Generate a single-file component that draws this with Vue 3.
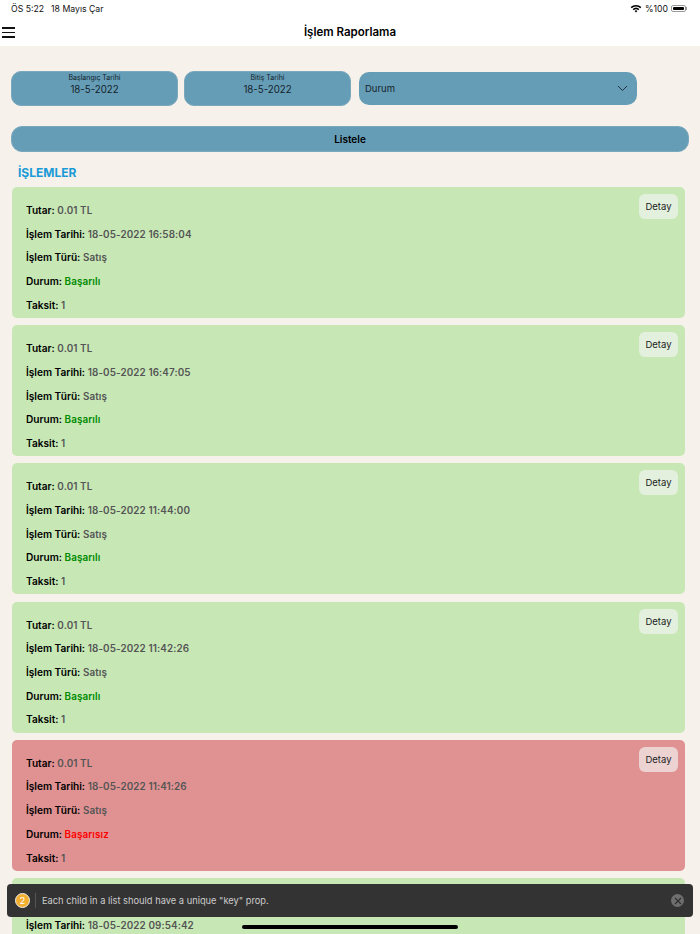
<template>
  <div class="page">
    <div class="status-bar">
      <div class="status-left">
        <span>ÖS 5:22</span>
        <span>18 Mayıs Çar</span>
      </div>
      <div class="status-right">
        <svg width="12" height="9" viewBox="0 0 12 9">
          <path d="M0.6 3.1A7.8 7.8 0 0 1 11.4 3.1L10.3 4.3A6.2 6.2 0 0 0 1.7 4.3Z" fill="#000" />
          <path d="M2.6 5.1A5 5 0 0 1 9.4 5.1L8.3 6.3A3.4 3.4 0 0 0 3.7 6.3Z" fill="#000" />
          <path d="M4.6 7A2 2 0 0 1 7.4 7L6 8.6Z" fill="#000" />
        </svg>
        <span>%100</span>
        <div class="battery"><div class="battery-fill"></div></div>
        <div class="battery-cap"></div>
      </div>
    </div>

    <header class="header">
      <button class="menu" aria-label="Menü">
        <span></span><span></span><span></span>
      </button>
      <h1>İşlem Raporlama</h1>
    </header>

    <main class="content">
      <div class="filters">
        <div class="date-box">
          <div class="date-label">Başlangıç Tarihi</div>
          <div class="date-value">18-5-2022</div>
        </div>
        <div class="date-box">
          <div class="date-label">Bitiş Tarihi</div>
          <div class="date-value">18-5-2022</div>
        </div>
        <div class="select-box">
          <span>Durum</span>
          <svg width="11" height="7" viewBox="0 0 11 7" fill="none">
            <path d="M1 1L5.5 5.5L10 1" stroke="#22333d" stroke-width="1" />
          </svg>
        </div>
      </div>

      <button class="list-btn">Listele</button>

      <h2 class="section-title">İŞLEMLER</h2>

      <div class="cards">
        <div v-for="item in islemler" :key="item.tarih" class="card" :class="{ failed: !item.basarili }">
          <button class="detail-btn">Detay</button>
          <div class="row"><b>Tutar:</b> 0.01 TL</div>
          <div class="row"><b>İşlem Tarihi:</b> {{ item.tarih }}</div>
          <div class="row"><b>İşlem Türü:</b> Satış</div>
          <div class="row"><b>Durum:</b> <span class="status" :class="item.basarili ? 'ok' : 'err'">{{ item.basarili ? 'Başarılı' : 'Başarısız' }}</span></div>
          <div class="row"><b>Taksit:</b> 1</div>
        </div>
      </div>
    </main>

    <div class="toast">
      <div class="toast-count">2</div>
      <div class="toast-text">Each child in a list should have a unique "key" prop.</div>
      <div class="toast-close">
        <svg width="8" height="8" viewBox="0 0 8 8" fill="none">
          <path d="M1 1L7 7M7 1L1 7" stroke="#2e2e2e" stroke-width="1.1" />
        </svg>
      </div>
    </div>
    <div class="home-indicator"></div>
  </div>
</template>

<script setup>
const islemler = [
  { tarih: '18-05-2022 16:58:04', basarili: true },
  { tarih: '18-05-2022 16:47:05', basarili: true },
  { tarih: '18-05-2022 11:44:00', basarili: true },
  { tarih: '18-05-2022 11:42:26', basarili: true },
  { tarih: '18-05-2022 11:41:26', basarili: false },
  { tarih: '18-05-2022 09:54:42', basarili: true },
];
</script>

<style>
html,
body {
  margin: 0;
  overflow: hidden;
}
</style>

<style scoped>
.page {
  position: relative;
  width: 700px;
  height: 934px;
  overflow: hidden;
  background: #f6f1ea;
  font-family: Inter, "Liberation Sans", sans-serif;
  color: #000;
}

.status-bar {
  height: 17px;
  padding: 0 11px;
  display: flex;
  justify-content: space-between;
  align-items: center;
  background: #fff;
  font-size: 8.7px;
  color: #111;
}

.status-left {
  display: flex;
  gap: 7px;
}

.status-right {
  display: flex;
  align-items: center;
  gap: 3px;
  margin-right: 2px;
}

.battery {
  width: 15px;
  height: 7px;
  padding: 1px;
  border: 1px solid #999;
  border-radius: 2px;
  box-sizing: border-box;
  display: flex;
}

.battery-fill {
  flex: 1;
  background: #000;
  border-radius: 1px;
}

.battery-cap {
  width: 1px;
  height: 3px;
  margin-left: -3px;
  background: #999;
}

.header {
  position: relative;
  height: 29px;
  background: #fff;
  display: flex;
  align-items: center;
  justify-content: center;
}

.header h1 {
  margin: 0;
  font-size: 11.5px;
  font-weight: 600;
}

.menu {
  position: absolute;
  left: 2px;
  top: 10px;
  width: 13px;
  padding: 0;
  background: none;
  border: 0;
  display: flex;
  flex-direction: column;
  gap: 3px;
}

.menu span {
  height: 1.5px;
  background: #111;
}

.content {
  padding: 25px 11px 0;
}

.filters {
  display: flex;
  align-items: center;
  gap: 6px;
}

.date-box {
  width: 167px;
  height: 35px;
  box-sizing: border-box;
  border-radius: 10px;
  border: 1px solid #7aa8bd;
  background: #669db6;
  text-align: center;
  color: #14232c;
  padding-top: 1px;
}

.date-label {
  font-size: 7px;
  line-height: 10px;
}

.date-value {
  font-size: 9.7px;
  line-height: 14px;
}

.select-box {
  width: 278px;
  height: 33px;
  margin-left: 2px;
  padding: 0 9px 0 6px;
  box-sizing: border-box;
  border-radius: 10px;
  background: #669db6;
  display: flex;
  align-items: center;
  justify-content: space-between;
  font-size: 9.5px;
  color: #14232c;
}

.list-btn {
  display: block;
  width: 678px;
  height: 26px;
  margin-top: 20px;
  padding: 0;
  border: 1px solid #7aa8bd;
  border-radius: 11px;
  background: #669db6;
  font: 600 10px Inter, "Liberation Sans", sans-serif;
  color: #000;
}

.section-title {
  margin: 13px 0 7px 7px;
  font-size: 12px;
  line-height: 15px;
  font-weight: 700;
  color: #1a9bd7;
}

.cards {
  display: flex;
  flex-direction: column;
  gap: 7.2px;
  margin-left: 1px;
}

.card {
  position: relative;
  width: 673px;
  height: 131px;
  flex: none;
  padding-top: 12px;
  box-sizing: border-box;
  border-radius: 5px;
  background: #c7e8b5;
}

.card.failed {
  background: #e09292;
}

.row {
  height: 23.7px;
  line-height: 23.7px;
  padding-left: 14px;
  font-size: 9.9px;
  font-weight: 600;
  color: #555;
  letter-spacing: 0.1px;
}

.row b {
  font-size: 10.1px;
  font-weight: 600;
  color: #000;
  letter-spacing: 0;
}

.status.ok {
  color: #008a00;
}

.status.err {
  color: #f00;
}

.detail-btn {
  position: absolute;
  top: 7px;
  right: 7px;
  width: 39px;
  height: 25px;
  padding: 0;
  border: 0;
  border-radius: 6px;
  background: rgba(245, 245, 245, 0.65);
  font: 400 9.5px Inter, "Liberation Sans", sans-serif;
  color: #222;
}

.toast {
  position: absolute;
  left: 7px;
  top: 884px;
  width: 686px;
  height: 33px;
  box-sizing: border-box;
  padding: 0 9px 0 8px;
  border-radius: 4px;
  background: #333;
  display: flex;
  align-items: center;
  font-size: 9.3px;
  color: #ccc;
}

.toast-count {
  width: 15px;
  height: 15px;
  border-radius: 50%;
  background: #f2ae2e;
  border: 1px solid #eee;
  box-sizing: border-box;
  display: flex;
  align-items: center;
  justify-content: center;
  font-size: 9.5px;
  color: #fff;
}

.toast-text {
  flex: 1;
  margin-left: 5px;
  padding-left: 6px;
  line-height: 15px;
  border-left: 1px solid #555;
}

.toast-close {
  width: 13px;
  height: 13px;
  border-radius: 50%;
  background: #6e6e6e;
  display: flex;
  align-items: center;
  justify-content: center;
}

.home-indicator {
  position: absolute;
  left: 242px;
  top: 925px;
  width: 216px;
  height: 4px;
  border-radius: 2px;
  background: #000;
}
</style>
